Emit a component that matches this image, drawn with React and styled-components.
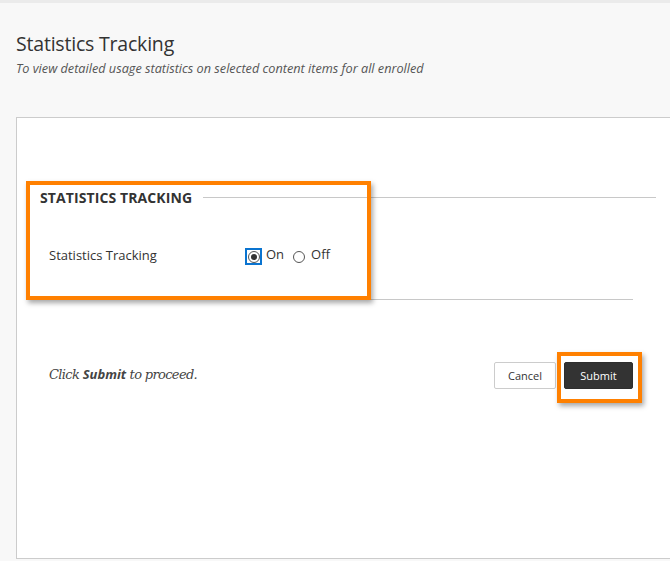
import React from "react";
import styled, { createGlobalStyle } from "styled-components";

const Global = createGlobalStyle`
  html, body { margin: 0; padding: 0; background: #f8f8f8; }
  body { font-family: "Open Sans", "Noto Sans", sans-serif; color: #333; overflow: hidden; }
`;

const Page = styled.div`
  width: 670px;
  height: 561px;
  border-top: 3px solid #ebebeb;
  box-sizing: border-box;
  position: relative;
  overflow: hidden;
`;

const Header = styled.header`
  padding: 28px 0 0 16px;
  height: 86px;
  box-sizing: border-box;
`;

const Title = styled.h1`
  margin: 0;
  font-size: 19.5px;
  font-weight: 400;
  line-height: 26px;
  color: #333;
  letter-spacing: -0.2px;
`;

const Subtitle = styled.p`
  margin: 3px 0 0;
  font-size: 12.7px;
  font-style: italic;
  color: #555;
  line-height: 16px;
`;

const Panel = styled.main`
  position: relative;
  margin-left: 16px;
  margin-top: 28px;
  width: 670px;
  height: 442px;
  background: #fff;
  border: 1px solid #ccc;
  box-sizing: border-box;
`;

const Fieldset = styled.section`
  padding: 69px 0 0 23px;
`;

const LegendRow = styled.div`
  display: flex;
  align-items: center;
  height: 20px;
`;

const Legend = styled.h2`
  margin: 0;
  font-size: 14px;
  font-weight: 700;
  color: #333;
  letter-spacing: 0.1px;
  white-space: nowrap;
`;

const Rule = styled.div`
  height: 1px;
  background: #c8c8c8;
  width: ${(p) => p.$w}px;
  margin-left: ${(p) => p.$ml || 0}px;
  margin-top: ${(p) => p.$mt || 0}px;
`;

const FieldRow = styled.div`
  display: flex;
  align-items: center;
  padding-left: 9px;
  margin-top: 38px;
  height: 20px;
`;

const Label = styled.span`
  font-size: 13px;
  width: 196px;
  color: #333;
`;

const Options = styled.div`
  display: flex;
  align-items: center;
  font-size: 13px;
`;

const RadioWrap = styled.span`
  display: inline-flex;
  align-items: center;
  justify-content: center;
  width: 17px;
  height: 17px;
  box-sizing: border-box;
  border: ${(p) => (p.$focus ? "2px solid #0a74d0" : "2px solid transparent")};
  margin-right: 4px;
  margin-top: 3px;
`;

const Radio = styled.span`
  width: 12px;
  height: 12px;
  border-radius: 50%;
  border: 1px solid #555;
  box-sizing: border-box;
  display: flex;
  align-items: center;
  justify-content: center;
  &::after {
    content: "";
    width: 6px;
    height: 6px;
    border-radius: 50%;
    background: ${(p) => (p.$checked ? "#333" : "transparent")};
  }
`;

const OptText = styled.span`
  margin-right: 6px;
  margin-top: -3px;
`;

const SubmitRow = styled.div`
  display: flex;
  align-items: center;
  justify-content: space-between;
  padding: 0 52px 0 32px;
  margin-top: 62px;
`;

const Hint = styled.p`
  margin: -3px 0 0;
  font-family: "DejaVu Serif", "Liberation Serif", serif;
  font-style: italic;
  font-size: 13px;
  color: #444;
  letter-spacing: -0.65px;
  b {
    font-family: "Open Sans", sans-serif;
    font-style: italic;
    font-weight: 700;
    letter-spacing: 0;
  }
`;

const Buttons = styled.div`
  display: flex;
  gap: 8px;
`;

const Button = styled.button`
  height: 27px;
  width: ${(p) => (p.$primary ? 69 : 62)}px;
  padding: 0;
  font-family: "Open Sans", sans-serif;
  font-size: 11px;
  border-radius: 2px;
  border: 1px solid ${(p) => (p.$primary ? "#2e2e2e" : "#ccc")};
  background: ${(p) => (p.$primary ? "#333" : "#fff")};
  color: ${(p) => (p.$primary ? "#fff" : "#333")};
  box-sizing: border-box;
`;

const Annotation = styled.div`
  position: absolute;
  left: ${(p) => p.$x}px;
  top: ${(p) => p.$y}px;
  width: ${(p) => p.$w}px;
  height: ${(p) => p.$h}px;
  border: 4px solid #ff8000;
  box-sizing: border-box;
  box-shadow: 2px 3px 5px rgba(0, 0, 0, 0.35);
  pointer-events: none;
`;

export default function App() {
  return (
    <>
      <Global />
      <Page>
        <Header>
          <Title>Statistics Tracking</Title>
          <Subtitle>To view detailed usage statistics on selected content items for all enrolled</Subtitle>
        </Header>
        <Panel>
          <Fieldset>
            <LegendRow>
              <Legend>STATISTICS TRACKING</Legend>
              <Rule $w={453} $ml={11} />
            </LegendRow>
            <FieldRow>
              <Label>Statistics Tracking</Label>
              <Options>
                <RadioWrap $focus>
                  <Radio $checked />
                </RadioWrap>
                <OptText>On</OptText>
                <RadioWrap>
                  <Radio />
                </RadioWrap>
                <OptText>Off</OptText>
              </Options>
            </FieldRow>
            <Rule $w={593} $mt={34} />
          </Fieldset>
          <SubmitRow>
            <Hint>
              Click <b>Submit</b> to proceed.
            </Hint>
            <Buttons>
              <Button>Cancel</Button>
              <Button $primary>Submit</Button>
            </Buttons>
          </SubmitRow>
          <Annotation $x={9} $y={63} $w={345} $h={119} />
          <Annotation $x={540} $y={234} $w={85} $h={51} />
        </Panel>
      </Page>
    </>
  );
}
